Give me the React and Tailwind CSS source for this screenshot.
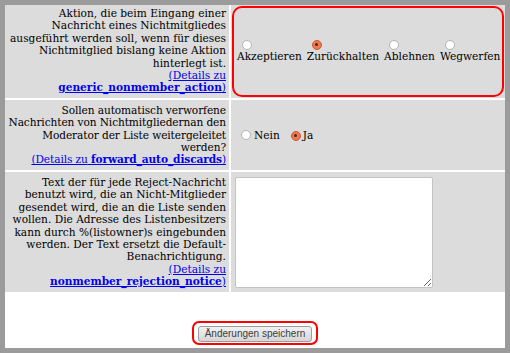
import React from 'react'

const serif = { fontFamily: '"DejaVu Serif", serif' }

const Radio = ({ checked }) => (
  <span
    className={
      'inline-block w-[10px] h-[10px] rounded-full border align-middle ' +
      (checked
        ? 'border-[#c85a35] bg-[#ee7a4f] relative'
        : 'border-[#b5b5b5] bg-white')
    }
  >
    {checked && (
      <span className="absolute left-[2.5px] top-[2.5px] w-[3px] h-[3px] rounded-full bg-[#5a2010]" />
    )}
  </span>
)

const DetailLink = ({ name, split }) => (
  <a href="#" className="text-[#0000ee] underline">
    (Details zu{split ? <br /> : ' '}
    <b>{name}</b>)
  </a>
)

const actions = [
  { label: 'Akzeptieren', checked: false },
  { label: 'Zurückhalten', checked: true },
  { label: 'Ablehnen', checked: false },
  { label: 'Wegwerfen', checked: false },
]

export default function App() {
  return (
    <div className="w-[510px] h-[353px] bg-[#9b9b9b] pt-[5px] pl-[5px] pr-[5px] pb-[5px]">
      <div
        className="w-[500px] h-[343px] bg-white flex flex-col text-[10.6px] leading-[12.4px] text-black"
        style={serif}
      >
        <div className="grid grid-cols-[224px_274px] gap-[2px]">
          {/* row 1 */}
          <div className="bg-[#dcdcdc] text-right pr-[3px] pl-[2px] pt-[2px] pb-[4px]">
            Aktion, die beim Eingang einer Nachricht eines Nichtmitgliedes ausgeführt werden soll, wenn für dieses Nichtmitglied bislang keine Aktion hinterlegt ist.
            <br />
            <DetailLink name="generic_nonmember_action" split />
          </div>
          <div className="bg-[#dcdcdc] p-[1px]">
            <div className="h-full border-2 border-[#ff0000] rounded-[10px] flex items-center pl-[3px]">
              <div className="flex gap-[5px] mt-[-2px]">
                {actions.map((a) => (
                  <div key={a.label} className="flex flex-col items-start">
                    <span className="ml-[5px] leading-[10px]">
                      <Radio checked={a.checked} />
                    </span>
                    <span>{a.label}</span>
                  </div>
                ))}
              </div>
            </div>
          </div>

          {/* row 2 */}
          <div className="bg-[#dcdcdc] text-right pr-[3px] pt-[4px] pb-[4px] tracking-[-0.1px]">
            Sollen automatisch verworfene Nachrichten von Nichtmitgliedernan den Moderator der Liste weitergeleitet werden?
            <br />
            <DetailLink name="forward_auto_discards" />
          </div>
          <div className="bg-[#dcdcdc] flex items-center pl-[10px]">
            <Radio />
            <span className="ml-[3px]">Nein</span>
            <span className="ml-[11px]">
              <Radio checked />
            </span>
            <span className="ml-[2px]">Ja</span>
          </div>

          {/* row 3 */}
          <div className="bg-[#dcdcdc] text-right pr-[3px] pl-[2px] pt-[4px] pb-[4px]">
            Text der für jede Reject-Nachricht benutzt wird, die an Nicht-Mitglieder gesendet wird, die an die Liste senden wollen. Die Adresse des Listenbesitzers kann durch %(listowner)s eingebunden werden. Der Text ersetzt die Default-Benachrichtigung.
            <br />
            <DetailLink name="nonmember_rejection_notice" split />
          </div>
          <div className="bg-[#dcdcdc] pl-[4px] pt-[5px]">
            <textarea
              className="block w-[198px] h-[111px] bg-white border border-[#c3c3c3] rounded-[2px] resize"
              readOnly
            />
          </div>
        </div>

        <div className="flex-1 flex justify-center items-end pb-[3px]">
          <div className="border-2 border-[#ff0000] rounded-[7px] px-[4px] pt-[3px] pb-[1px]">
            <button
              className="h-[16px] px-[6px] text-[10px] leading-[14px] text-[#3c3c3c] bg-gradient-to-b from-[#f2f2f2] to-[#d6d6d6] border border-[#9d9d9d] rounded-[3px]"
              style={{ fontFamily: '"Liberation Sans", sans-serif' }}
            >
              Änderungen speichern
            </button>
          </div>
        </div>
      </div>
    </div>
  )
}
